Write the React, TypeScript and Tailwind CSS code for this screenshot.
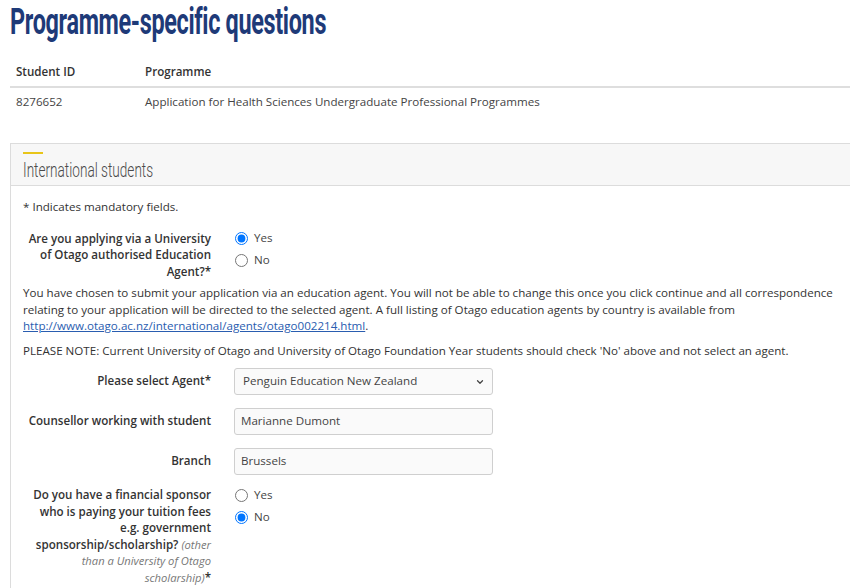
import { ChevronDown } from "lucide-react";

const body = { fontFamily: '"Open Sans", "Liberation Sans", sans-serif' };
const heading = { fontFamily: 'Roboto, "Liberation Sans", sans-serif' };

function Label({ children }: { children: React.ReactNode }) {
  return (
    <div className="w-[191px] shrink-0 pr-[3px] text-right font-semibold text-[#333] leading-[16.5px]">
      {children}
    </div>
  );
}

function Radio({ label, checked, name }: { label: string; checked?: boolean; name: string }) {
  return (
    <label className="flex items-center gap-[6px] h-[22px] text-[#444]">
      <input type="radio" name={name} defaultChecked={checked} className="w-[13px] h-[13px] m-0 ml-[1px]" />
      {label}
    </label>
  );
}

export default function App() {
  return (
    <div className="w-[850px] h-[588px] overflow-hidden bg-white text-[11.6px] text-[#333]" style={body}>
      <div className="w-[870px] pl-[10px]">
        <h1 className="h-[46px] text-[36px] leading-[44px] font-bold text-[#1e3a78] whitespace-nowrap" style={heading}>
          <span className="inline-block origin-left scale-x-[0.65] tracking-[-0.5px]">Programme-specific questions</span>
        </h1>

        <table className="w-full text-left mt-[11px]">
          <thead>
            <tr className="h-[30px] border-b-2 border-[#dedede]">
              <th className="w-[135px] pl-[6px] font-semibold text-[#333]">Student ID</th>
              <th className="font-semibold text-[#333]">Programme</th>
            </tr>
          </thead>
          <tbody>
            <tr className="h-[29px]">
              <td className="pl-[6px] text-[#444]">8276652</td>
              <td className="text-[#444]">Application for Health Sciences Undergraduate Professional Programmes</td>
            </tr>
          </tbody>
        </table>

        <section className="mt-[27px] border border-[#dcdcdc]">
          <div className="h-[42px] bg-[#f7f7f7] border-b border-[#dcdcdc] pl-[12px] pt-[8px]">
            <div className="w-[20px] h-[2px] bg-[#e8c519]" />
            <h2 className="text-[20px] leading-[24px] mt-[4px] text-[#4a4a4a] font-light whitespace-nowrap" style={heading}>
              <span className="inline-block origin-left scale-x-[0.68]">International students</span>
            </h2>
          </div>

          <div className="pl-[12px] pt-[13px] pb-[40px] leading-[16.5px]">
            <p>* Indicates mandatory fields.</p>

            <div className="flex mt-[15px]">
              <Label>
                Are you applying via a University of Otago authorised Education Agent?*
              </Label>
              <div className="ml-[20px] -mt-[3px]">
                <Radio name="agent" label="Yes" checked />
                <Radio name="agent" label="No" />
              </div>
            </div>

            <p className="mt-[5px] w-[830px] pr-[10px]">
              You have chosen to submit your application via an education agent. You will not be able to change this once you click continue and all correspondence relating to your application will be directed to the selected agent. A full listing of Otago education agents by country is available from{" "}
              <a href="#" className="text-[#2a5db0] underline">http://www.otago.ac.nz/international/agents/otago002214.html</a>.
            </p>

            <p className="mt-[8px]">
              PLEASE NOTE: Current University of Otago and University of Otago Foundation Year students should check 'No' above and not select an agent.
            </p>

            <div className="flex items-center mt-[9px]">
              <Label>Please select Agent*</Label>
              <div className="ml-[20px] relative w-[259px] h-[27px] border border-[#cfcfcf] rounded-[3px] bg-[#fafafa] flex items-center pl-[8px] text-[#444]">
                Penguin Education New Zealand
                <ChevronDown className="absolute right-[7px] top-[8px] w-[10px] h-[10px] text-[#444]" strokeWidth={3} />
              </div>
            </div>

            <div className="flex items-center mt-[13px]">
              <Label>Counsellor working with student</Label>
              <div className="ml-[20px] w-[259px] h-[27px] border border-[#cfcfcf] rounded-[3px] bg-[#fafafa] flex items-center pl-[6px] text-[#444]">
                Marianne Dumont
              </div>
            </div>

            <div className="flex items-center mt-[13px]">
              <Label>Branch</Label>
              <div className="ml-[20px] w-[259px] h-[27px] border border-[#cfcfcf] rounded-[3px] bg-[#fafafa] flex items-center pl-[6px] text-[#444]">
                Brussels
              </div>
            </div>

            <div className="flex mt-[12px]">
              <Label>
                Do you have a financial sponsor who is paying your tuition fees e.g. government sponsorship/scholarship?{" "}
                <span className="italic font-normal text-[11.2px] text-[#777]">(other than a University of Otago scholarship)</span>*
              </Label>
              <div className="ml-[20px] -mt-[3px]">
                <Radio name="sponsor" label="Yes" />
                <Radio name="sponsor" label="No" checked />
              </div>
            </div>
          </div>
        </section>
      </div>
    </div>
  );
}
